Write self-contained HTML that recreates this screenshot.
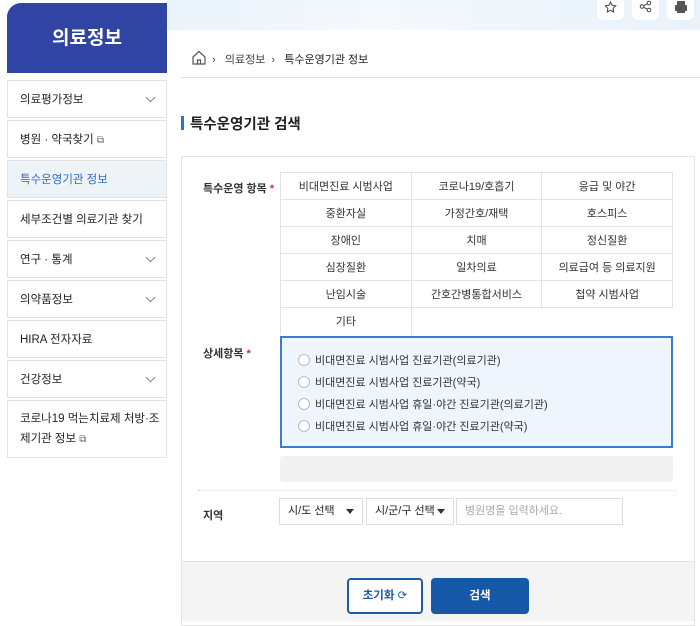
<!DOCTYPE html>
<html><head><meta charset="utf-8"><style>
*{box-sizing:border-box;margin:0;padding:0}
body{width:700px;height:620px;overflow:hidden;background:#fff;font-family:"Liberation Sans","Noto Sans CJK KR",sans-serif;color:#222;position:relative;font-size:11px}
.abs{position:absolute}
.topband{left:167px;top:0;width:533px;height:30px;background:linear-gradient(90deg,#eaf3fb,#f4f9fd 40%,#e8f2fb)}
.tb{top:-6px;width:27px;height:26px;background:#fff;border-radius:6px}
.head{left:7px;top:3px;width:160px;height:70px;background:#2f44a3;border-radius:14px 0 0 0;color:#fff;font-size:19px;font-weight:bold;text-align:center;line-height:72px}
.mi{left:7px;width:160px;height:38px;border:1px solid #e2e2e2;font-size:11.5px;padding-left:12px;line-height:38px;color:#222}
.mi.act{background:#eef3f8;color:#2b6fc4}
.chev{position:absolute;right:12px;top:13px;width:7px;height:7px;border-right:1px solid #888;border-bottom:1px solid #888;transform:rotate(45deg)}
.grid{left:280px;top:172px;width:393px;border-collapse:collapse}
.grid td{border:1px solid #e3e3e3;height:27px;text-align:center;font-size:11px;width:131px;color:#333}
.lbl{font-size:11px;font-weight:bold;color:#333}
.req{color:#e02b2b}
.radio{font-size:11px;color:#333;left:298px}
.radio span{display:inline-block;width:12px;height:12px;border:1px solid #bbb;border-radius:50%;background:#fff;vertical-align:-2px;margin-right:5px}
.sel{top:498px;height:27px;border:1px solid #ddd;font-size:11px;line-height:25px;padding-left:8px}
.sel i{position:absolute;right:8px;top:10px;border-left:4px solid transparent;border-right:4px solid transparent;border-top:5px solid #333}
</style></head><body>
<div class="abs topband"></div>
<div class="abs tb" style="left:597px"><svg width="27" height="26" viewBox="0 0 27 26"><path d="M13.5 8l1.6 3.3 3.6.5-2.6 2.5.6 3.6-3.2-1.7-3.2 1.7.6-3.6-2.6-2.5 3.6-.5z" fill="none" stroke="#444" stroke-width="1"/></svg></div>
<div class="abs tb" style="left:632px"><svg width="27" height="26" viewBox="0 0 27 26"><circle cx="17" cy="9" r="1.8" fill="none" stroke="#444"/><circle cx="10" cy="12.5" r="1.8" fill="none" stroke="#444"/><circle cx="17" cy="16" r="1.8" fill="none" stroke="#444"/><path d="M11.6 11.7l3.8-2M11.6 13.3l3.8 2" stroke="#444"/></svg></div>
<div class="abs tb" style="left:667px"><svg width="27" height="26" viewBox="0 0 27 26"><rect x="10" y="7" width="8" height="4" fill="#555"/><rect x="8" y="11" width="12" height="6" rx="1" fill="#555"/><rect x="10" y="15" width="8" height="4" fill="#555"/></svg></div>
<div class="abs head">의료정보</div>
<div class="abs mi" style="top:80px">의료평가정보<i class="chev"></i></div>
<div class="abs mi" style="top:120px">병원 · 약국찾기 <span style="font-size:10px;color:#666">⧉</span></div>
<div class="abs mi act" style="top:160px">특수운영기관 정보</div>
<div class="abs mi" style="top:200px">세부조건별 의료기관 찾기</div>
<div class="abs mi" style="top:240px">연구 · 통계<i class="chev"></i></div>
<div class="abs mi" style="top:280px">의약품정보<i class="chev"></i></div>
<div class="abs mi" style="top:320px">HIRA 전자자료</div>
<div class="abs mi" style="top:360px">건강정보<i class="chev"></i></div>
<div class="abs mi" style="top:400px;height:58px;line-height:20px;padding-top:8px">코로나19 먹는치료제 처방·조<br>제기관 정보 <span style="font-size:10px;color:#666">⧉</span></div>
<svg class="abs" style="left:191px;top:50px" width="16" height="15" viewBox="0 0 16 15"><path d="M2 7L8 1.5 14 7V14H2Z" fill="none" stroke="#555" stroke-width="1.2"/><path d="M6.5 14v-4h3v4" fill="none" stroke="#555" stroke-width="1.2"/></svg>
<div class="abs" style="left:212px;top:51px;font-size:11px;color:#444">›&nbsp;&nbsp; 의료정보 &nbsp;›&nbsp;&nbsp; <span style="color:#222">특수운영기관 정보</span></div>
<div class="abs" style="left:181px;top:77px;width:519px;height:1px;background:#e2e2e2"></div>
<div class="abs" style="left:181px;top:116px;width:3px;height:14px;background:#2b73d0"></div>
<div class="abs" style="left:190px;top:113px;font-size:14.5px;font-weight:bold;color:#222">특수운영기관 검색</div>
<div class="abs" style="left:181px;top:156px;width:514px;height:470px;border:1px solid #e4e4e4"></div>
<div class="abs" style="left:182px;top:561px;width:512px;height:60px;background:#f4f4f4;border-top:1px solid #e2e2e2"></div>
<div class="abs lbl" style="left:203px;top:180px">특수운영 항목 <span class="req">*</span></div>
<table class="abs grid">
<tr><td>비대면진료 시범사업</td><td>코로나19/호흡기</td><td>응급 및 야간</td></tr>
<tr><td>중환자실</td><td>가정간호/재택</td><td>호스피스</td></tr>
<tr><td>장애인</td><td>치매</td><td>정신질환</td></tr>
<tr><td>심장질환</td><td>일차의료</td><td>의료급여 등 의료지원</td></tr>
<tr><td>난임시술</td><td>간호간병통합서비스</td><td>첩약 시범사업</td></tr>
<tr><td style="border-bottom:none">기타</td><td style="border:none;border-left:1px solid #e3e3e3"></td><td style="border:none"></td></tr>
</table>
<div class="abs lbl" style="left:203px;top:345px">상세항목 <span class="req">*</span></div>
<div class="abs" style="left:280px;top:336px;width:393px;height:112px;border:2px solid #3a7bd5;background:#eef5fd"></div>
<div class="abs radio" style="top:352px"><span></span>비대면진료 시범사업 진료기관(의료기관)</div>
<div class="abs radio" style="top:374px"><span></span>비대면진료 시범사업 진료기관(약국)</div>
<div class="abs radio" style="top:396px"><span></span>비대면진료 시범사업 휴일·야간 진료기관(의료기관)</div>
<div class="abs radio" style="top:418px"><span></span>비대면진료 시범사업 휴일·야간 진료기관(약국)</div>
<div class="abs" style="left:280px;top:456px;width:393px;height:26px;background:#f1f1f1;border-radius:3px"></div>
<div class="abs" style="left:198px;top:490px;width:478px;border-top:1px dotted #ddd"></div>
<div class="abs lbl" style="left:203px;top:507px">지역</div>
<div class="abs sel" style="left:279px;width:84px">시/도 선택<i></i></div>
<div class="abs sel" style="left:366px;width:88px">시/군/구 선택<i></i></div>
<div class="abs sel" style="left:456px;width:167px;color:#aaa">병원명을 입력하세요.</div>
<div class="abs" style="left:347px;top:578px;width:76px;height:36px;border:2px solid #1d5ba8;border-radius:4px;background:#fff;text-align:center;line-height:32px;font-weight:bold;color:#1d5ba8;font-size:11.5px">초기화 <span style="font-weight:normal">⟳</span></div>
<div class="abs" style="left:431px;top:578px;width:98px;height:36px;background:#1559a8;border-radius:4px;text-align:center;line-height:36px;font-weight:bold;color:#fff;font-size:11.5px">검색</div>
</body></html>
